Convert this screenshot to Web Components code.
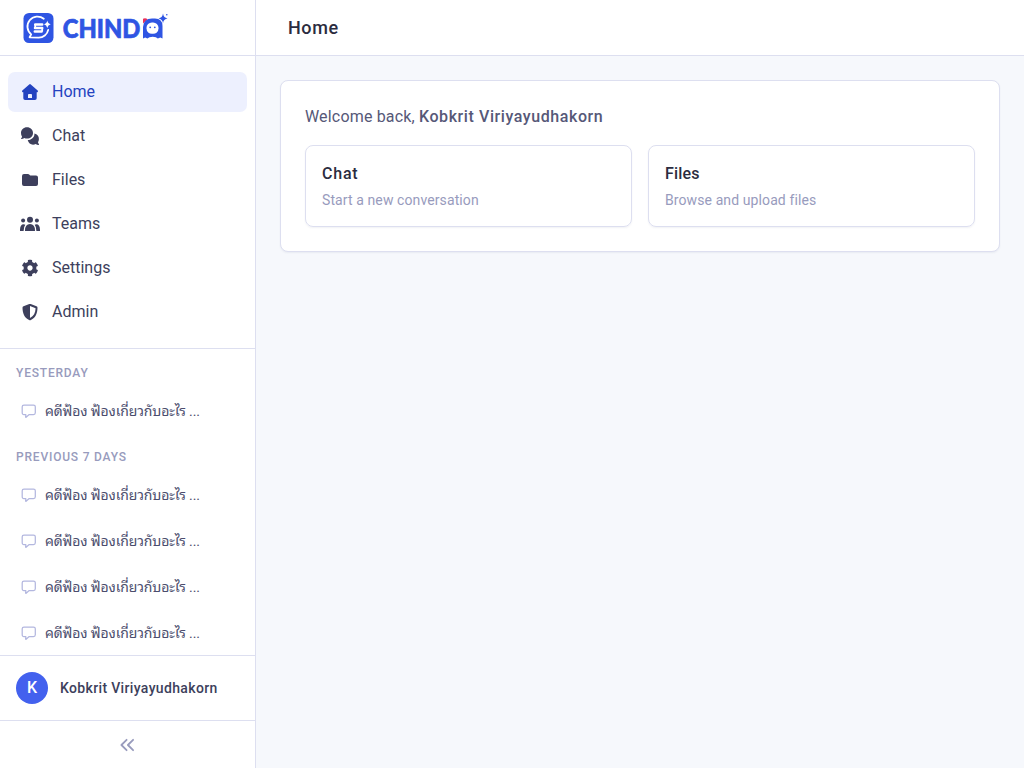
<!DOCTYPE html>
<html lang="en">
<head>
    <meta charset="UTF-8">
    <title>Chinda - Home</title>
    <style>
        body {
            margin: 0;
            font-family: Roboto, "Noto Sans Thai Looped", "Loma", "Noto Sans Thai", "Noto Sans", sans-serif;
            color: #3d3f5c;
            --line: #dddff0;
            --muted: #989bbd;
        }
    </style>

    <template id="appTemplate">
        <style>
            :host {
                display: grid;
                grid-template-columns: 256px 1fr;
                height: 100vh;
                overflow: hidden;
                background: #f6f8fc;
            }
            .side {
                box-sizing: border-box;
                display: flex;
                flex-direction: column;
                min-height: 0;
                background: white;
                border-right: 1px solid var(--line);
            }
            header {
                box-sizing: border-box;
                height: 56px;
                padding-left: 32px;
                display: flex;
                align-items: center;
                background: white;
                border-bottom: 1px solid var(--line);
                font-size: 18px;
                font-weight: 500;
                letter-spacing: .6px;
                color: #2b2c40;
            }
            main { padding: 24px; }
        </style>
        <div class="side"><slot name="side"></slot></div>
        <div>
            <header><slot name="title"></slot></header>
            <main><slot></slot></main>
        </div>
    </template>

    <template id="logoTemplate">
        <style>
            :host {
                display: block;
                box-sizing: border-box;
                flex: none;
                height: 56px;
                border-bottom: 1px solid var(--line);
            }
            svg { display: block; }
            text {
                font: 900 26px Lato, sans-serif;
                fill: #2f55e3;
                stroke: #2f55e3;
                stroke-width: .7;
                stroke-linejoin: round;
            }
            .small {
                font-size: 14px;
                stroke: none;
            }
        </style>
        <svg width="180" height="55" viewBox="0 0 180 55">
            <rect x="23.5" y="13" width="30" height="30" rx="5.5" fill="#2f55e3"/>
            <path d="M43.8 18.8A10 10 0 0 0 31.2 34.4L29.6 37.3 38.5 37.6A9.6 9.6 0 0 0 48.2 29.8" fill="none" stroke="white" stroke-width="1.8" stroke-linecap="round" stroke-linejoin="round"/>
            <path d="M42.2 24.6H35.2M35 28H42.2M34.8 31.4H41.6" fill="none" stroke="white" stroke-width="2.5" stroke-linecap="round"/>
            <path d="M35.2 24.6V28M42.2 28V31.4" stroke="white" stroke-width="1.8"/>
            <path d="M47.3 20.6Q47.9 23.8 50.7 24.3 47.9 24.9 47.3 28 46.7 24.9 43.9 24.3 46.7 23.8 47.3 20.6Z" fill="white"/>
            <text y="37.7"><tspan x="62.8" textLength="77.5" lengthAdjust="spacingAndGlyphs">CHIND</tspan><tspan class="small" x="147" y="34">A</tspan></text>
            <path d="M143 23.5V18.7Q145.8 17.6 147.7 19.5Z" fill="#e8315b"/>
            <path d="M143 38.5V27Q143.5 18.5 152 18.5H155Q162.5 18.5 162.5 26V38.5L160.3 37.6 157.8 38.5Q156.5 36.8 152.7 36.8T147.4 38.5L145.2 37.6Z" fill="#2f55e3"/>
            <rect x="146.5" y="22.4" width="12" height="11.4" rx="5.4" fill="white"/>
            <circle cx="150.2" cy="27.3" r=".9" fill="#2f55e3"/>
            <circle cx="154.8" cy="27.3" r=".9" fill="#2f55e3"/>
            <path d="M163 13.6Q163.6 17.9 167.5 18.5 163.6 19.1 163 23.2 162.4 19.1 158.5 18.5 162.4 17.9 163 13.6Z" fill="#2f55e3"/>
            <circle cx="166.8" cy="14.7" r=".8" fill="#2f55e3"/>
        </svg>
    </template>

    <template id="navTemplate">
        <style>
            :host {
                display: flex;
                flex-direction: column;
                flex: none;
                gap: 4px;
                padding: 16px 8px;
                border-bottom: 1px solid var(--line);
            }
        </style>
        <slot></slot>
    </template>

    <template id="navItemTemplate">
        <style>
            :host {
                display: flex;
                align-items: center;
                gap: 12px;
                height: 40px;
                padding: 0 12px;
                border-radius: 7px;
                font-size: 16px;
            }
            :host([active]) {
                background: #edf0fe;
                color: #2443c0;
            }
            svg { width: 20px; height: 20px; fill: currentColor; }
            span { padding-bottom: 1px; }
        </style>
        <svg viewBox="0 0 20 20"></svg>
        <span><slot></slot></span>
    </template>

    <template id="groupTemplate">
        <style>
            :host { display: block; }
            h3 {
                margin: 0;
                padding: 16px 16px 7px;
                font-size: 12px;
                line-height: 16px;
                font-weight: 500;
                letter-spacing: .8px;
                text-transform: uppercase;
                color: var(--muted);
            }
            :host(:not(:first-child)) h3 { padding-top: 15px; }
        </style>
        <h3></h3>
        <slot></slot>
    </template>

    <template id="threadTemplate">
        <style>
            :host {
                display: flex;
                align-items: center;
                gap: 8px;
                height: 46px;
                padding-left: 21px;
                font-size: 14px;
                letter-spacing: -.13px;
                white-space: nowrap;
                color: #4b4d6d;
            }
            svg { flex: none; }
            span { padding-bottom: 4px; }
        </style>
        <svg width="16" height="16" viewBox="0 0 16 16" fill="none" stroke="#b3b7df" stroke-width="1.25" stroke-linejoin="round">
            <path d="M3 2h9.5Q14.3 2 14.3 3.8v6q0 1.8-1.8 1.8H8.2L4.8 14.4v-2.8H3Q1.2 11.6 1.2 9.8v-6Q1.2 2 3 2Z"/>
        </svg>
        <span><slot></slot></span>
    </template>

    <template id="userTemplate">
        <style>
            :host {
                box-sizing: border-box;
                flex: none;
                display: flex;
                align-items: center;
                gap: 12px;
                height: 66px;
                padding: 0 16px;
                background: white;
                border: solid var(--line);
                border-width: 1px 0;
                font-size: 14px;
                font-weight: 500;
                letter-spacing: .35px;
            }
            .avatar {
                width: 32px;
                line-height: 32px;
                border-radius: 50%;
                background: #4361ee;
                color: white;
                font-size: 16px;
                letter-spacing: 0;
                text-align: center;
            }
        </style>
        <div class="avatar"></div>
        <span><slot></slot></span>
    </template>

    <template id="collapseTemplate">
        <style>
            :host {
                flex: none;
                display: flex;
                align-items: center;
                justify-content: center;
                height: 47px;
            }
        </style>
        <svg width="16" height="16" viewBox="0 0 16 16" fill="none" stroke="#989bbd" stroke-width="1.8" stroke-linecap="round" stroke-linejoin="round">
            <path d="M6.6 2.8 1.4 8l5.2 5.2M13.1 2.8 7.9 8l5.2 5.2"/>
        </svg>
    </template>

    <template id="welcomeTemplate">
        <style>
            :host {
                display: block;
                box-sizing: border-box;
                height: 172px;
                padding: 24px;
                background: white;
                border: 1px solid var(--line);
                border-radius: 8px;
                box-shadow: 0 1px 2px rgba(60, 65, 120, .07);
            }
            p {
                margin: 0 0 16px;
                line-height: 24px;
                font-size: 16px;
                letter-spacing: .17px;
                color: #565878;
            }
            .cards {
                display: grid;
                grid-template-columns: 1fr 1fr;
                gap: 16px;
            }
            ::slotted([slot="greeting"]) { --strong-spacing: .58px; }
        </style>
        <p><slot name="greeting"></slot></p>
        <div class="cards"><slot></slot></div>
    </template>

    <template id="cardTemplate">
        <style>
            :host {
                display: block;
                box-sizing: border-box;
                height: 82px;
                padding: 16px;
                border: 1px solid var(--line);
                border-radius: 8px;
                box-shadow: 0 1px 2px rgba(60, 65, 120, .07);
            }
            h2 {
                margin: 0 0 4px;
                font-size: 16px;
                line-height: 24px;
                font-weight: 500;
                letter-spacing: .8px;
                color: #2b2c40;
            }
            div {
                font-size: 14px;
                line-height: 20px;
                letter-spacing: .1px;
                color: var(--muted);
            }
            :host([heading="Files"]) h2 { letter-spacing: .2px; }
        </style>
        <h2></h2>
        <div><slot></slot></div>
    </template>
</head>
<body>
<chinda-app>
    <chinda-logo slot="side"></chinda-logo>
    <chinda-nav slot="side">
        <nav-item icon="home" active>Home</nav-item>
        <nav-item icon="chat">Chat</nav-item>
        <nav-item icon="files">Files</nav-item>
        <nav-item icon="teams">Teams</nav-item>
        <nav-item icon="settings">Settings</nav-item>
        <nav-item icon="admin">Admin</nav-item>
    </chinda-nav>
    <div slot="side" style="flex: 1; min-height: 0; overflow: hidden">
        <thread-group heading="Yesterday">
            <thread-item>คดีฟ้อง ฟ้องเกี่ยวกับอะไร ...</thread-item>
        </thread-group>
        <thread-group heading="Previous 7 days">
            <thread-item>คดีฟ้อง ฟ้องเกี่ยวกับอะไร ...</thread-item>
            <thread-item>คดีฟ้อง ฟ้องเกี่ยวกับอะไร ...</thread-item>
            <thread-item>คดีฟ้อง ฟ้องเกี่ยวกับอะไร ...</thread-item>
            <thread-item>คดีฟ้อง ฟ้องเกี่ยวกับอะไร ...</thread-item>
        </thread-group>
    </div>
    <user-badge slot="side" initial="K">Kobkrit Viriyayudhakorn</user-badge>
    <collapse-button slot="side"></collapse-button>

    <span slot="title">Home</span>
    <welcome-panel>
        <span slot="greeting">Welcome back, <b style="font-weight: 500; letter-spacing: var(--strong-spacing)">Kobkrit Viriyayudhakorn</b></span>
        <link-card heading="Chat">Start a new conversation</link-card>
        <link-card heading="Files">Browse and upload files</link-card>
    </welcome-panel>
</chinda-app>

<script>
    // 20x20 icons
    const icons = {
        home: '<path fill-rule="evenodd" d="M9.2 2.4Q10 1.7 10.8 2.4L17.7 8.5Q18.3 9.2 17.7 9.9 17.4 10.2 16.7 10.2V16.2Q16.7 18 14.9 18H5.1Q3.3 18 3.3 16.2V10.2Q2.6 10.2 2.3 9.9 1.7 9.2 2.3 8.5ZM8.9 12Q8 12 8 12.9V16.1H12V12.9Q12 12 11.1 12Z"/>',
        chat: '<path d="M7 1.2C10.5 1.2 13 3.7 13 6.9S10.5 12.6 7 12.6Q5.5 12.6 4.3 12.1 2.9 13.2 1.3 13.1 .8 12.8 1.2 12.3 2 11.3 2 10.4 1 8.9 1 6.9C1 3.7 3.5 1.2 7 1.2Z"/><path d="M14.4 7.5Q18.9 8.7 18.9 12.9 18.9 14.9 18 16.3 18.2 17.2 18.9 18.1 19.3 18.7 18.7 19 17.2 19.1 15.7 18.1 14.5 18.7 13 18.7 9 18.7 7.7 14.1C11.8 13.9 14.8 11 14.4 7.5Z"/>',
        files: '<path d="M4 4H8Q8.7 4 9.2 4.5L9.9 5.2Q10.3 5.5 10.8 5.5H16Q18 5.5 18 7.5V14Q18 16 16 16H4Q2 16 2 14V6Q2 4 4 4Z"/>',
        teams: '<circle cx="10" cy="5.7" r="3"/><circle cx="3.1" cy="6.6" r="2"/><circle cx="16.9" cy="6.6" r="2"/><path d="M5 16.9Q4.9 10 10 10T15 16.9ZM0 16.9Q-.2 10.3 3.6 10.2 4.6 10.2 5.3 10.7 3.6 12.8 3.6 16.9ZM20 16.9Q20.2 10.3 16.4 10.2 15.4 10.2 14.7 10.7 16.4 12.8 16.4 16.9Z"/>',
        settings: '<path transform="translate(1.52 1.52) scale(.03313)" d="M487.4 315.7l-42.6-24.6c4.3-23.2 4.3-47 0-70.2l42.6-24.6c4.9-2.8 7.1-8.6 5.5-14-11.1-35.6-30-67.8-54.7-94.6-3.8-4.1-10-5.1-14.8-2.3L380.8 110c-17.9-15.4-38.5-27.3-60.8-35.1V25.8c0-5.6-3.9-10.5-9.4-11.7-36.7-8.2-74.3-7.8-109.2 0-5.5 1.2-9.4 6.1-9.4 11.7V75c-22.2 7.9-42.8 19.8-60.8 35.1L88.7 85.5c-4.9-2.8-11-1.9-14.8 2.3-24.7 26.7-43.6 58.9-54.7 94.6-1.7 5.4.6 11.2 5.5 14L67.3 221c-4.3 23.2-4.3 47 0 70.2l-42.6 24.6c-4.9 2.8-7.1 8.6-5.5 14 11.1 35.6 30 67.8 54.7 94.6 3.8 4.1 10 5.1 14.8 2.3l42.6-24.6c17.9 15.4 38.5 27.3 60.8 35.1v49.2c0 5.6 3.9 10.5 9.4 11.7 36.7 8.2 74.3 7.8 109.2 0 5.5-1.2 9.4-6.1 9.4-11.7v-49.2c22.2-7.9 42.8-19.8 60.8-35.1l42.6 24.6c4.9 2.8 11 1.9 14.8-2.3 24.7-26.7 43.6-58.9 54.7-94.6 1.5-5.5-.7-11.3-5.6-14.1zM256 336c-44.1 0-80-35.9-80-80s35.9-80 80-80 80 35.9 80 80-35.9 80-80 80z"/>',
        admin: '<path fill-rule="evenodd" d="M9.3 2.1Q10 1.8 10.7 2.1L16.5 4.3Q17.5 4.7 17.5 5.7C17.4 11.5 15.5 15.7 10.9 18Q10 18.4 9.1 18C4.5 15.7 2.6 11.5 2.5 5.7Q2.5 4.7 3.5 4.3ZM10 4V16.1C13.8 14 15.4 10.8 15.6 6.2Z"/>'
    };

    class TemplateElement extends HTMLElement {
        constructor(templateId) {
            super();
            const shadowRoot = this.attachShadow({ mode: 'open' });
            shadowRoot.appendChild(document.getElementById(templateId).content.cloneNode(true));
        }
    }

    class ChindaApp extends TemplateElement {
        constructor() { super('appTemplate'); }
    }

    class ChindaLogo extends TemplateElement {
        constructor() { super('logoTemplate'); }
    }

    class ChindaNav extends TemplateElement {
        constructor() { super('navTemplate'); }
    }

    class NavItem extends TemplateElement {
        constructor() { super('navItemTemplate'); }

        connectedCallback() {
            this.shadowRoot.querySelector('svg').innerHTML = icons[this.getAttribute('icon')];
        }
    }

    class ThreadGroup extends TemplateElement {
        constructor() { super('groupTemplate'); }

        connectedCallback() {
            this.shadowRoot.querySelector('h3').textContent = this.getAttribute('heading');
        }
    }

    class ThreadItem extends TemplateElement {
        constructor() { super('threadTemplate'); }
    }

    class UserBadge extends TemplateElement {
        constructor() { super('userTemplate'); }

        connectedCallback() {
            this.shadowRoot.querySelector('.avatar').textContent = this.getAttribute('initial');
        }
    }

    class CollapseButton extends TemplateElement {
        constructor() { super('collapseTemplate'); }
    }

    class WelcomePanel extends TemplateElement {
        constructor() { super('welcomeTemplate'); }
    }

    class LinkCard extends TemplateElement {
        constructor() { super('cardTemplate'); }

        connectedCallback() {
            this.shadowRoot.querySelector('h2').textContent = this.getAttribute('heading');
        }
    }

    customElements.define('chinda-app', ChindaApp);
    customElements.define('chinda-logo', ChindaLogo);
    customElements.define('chinda-nav', ChindaNav);
    customElements.define('nav-item', NavItem);
    customElements.define('thread-group', ThreadGroup);
    customElements.define('thread-item', ThreadItem);
    customElements.define('user-badge', UserBadge);
    customElements.define('collapse-button', CollapseButton);
    customElements.define('welcome-panel', WelcomePanel);
    customElements.define('link-card', LinkCard);
</script>
</body>
</html>
